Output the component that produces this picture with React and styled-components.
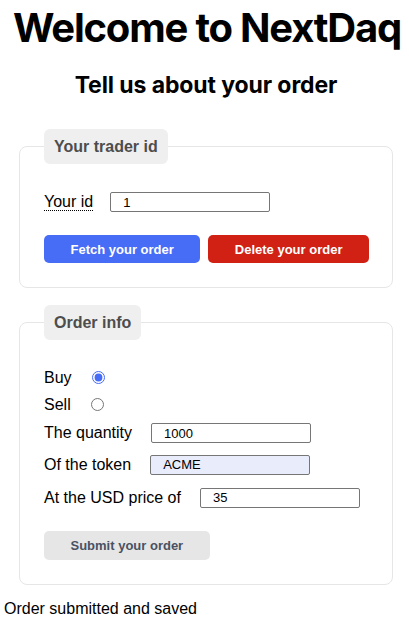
import React, { useState } from 'react'
import styled, { createGlobalStyle } from 'styled-components'

const GlobalStyle = createGlobalStyle`
  body {
    margin: 0;
    background: #fff;
    color: #000;
    font-family: "Liberation Sans", Arial, sans-serif;
    font-size: 16px;
  }
`

const Page = styled.div`
  padding: 0 4px;
`

const Title = styled.h1`
  margin: 4px 0 0;
  padding-left: 5px;
  font-family: Inter, "Liberation Sans", sans-serif;
  font-size: 40px;
  line-height: 48px;
  font-weight: 700;
  text-align: center;
  white-space: nowrap;
  letter-spacing: -1.2px;
`

const Subtitle = styled.h2`
  margin: 19px 0 0;
  padding-left: 3px;
  font-family: Inter, "Liberation Sans", sans-serif;
  font-size: 23px;
  line-height: 28px;
  font-weight: 700;
  text-align: center;
  letter-spacing: -0.1px;
`

const Fieldset = styled.fieldset`
  margin: ${p => p.$top}px 12px 0 15px;
  padding: 24px 24px 24px;
  border: 1px solid #e6e6e6;
  border-radius: 8px;
  min-width: 0;
`

const Legend = styled.legend`
  padding: 8px 10px;
  margin-left: 0;
  background: #efefef;
  border-radius: 6px;
  color: #4d4d4d;
  font-weight: 700;
  font-size: 16px;
  line-height: 19px;
`

const Row = styled.div`
  display: flex;
  align-items: center;
  height: ${p => p.$h}px;
`

const Label = styled.label`
  margin-right: ${p => p.$gap || 0}px;
  white-space: nowrap;
`

const Abbr = styled.span`
  text-decoration: underline dotted;
  text-underline-offset: 3px;
  text-decoration-thickness: 1px;
`

const TextInput = styled.input`
  box-sizing: border-box;
  width: 160px;
  height: 20px;
  padding: 0 12px;
  border: 1px solid #767676;
  border-radius: 2px;
  background: ${p => (p.$filled ? '#e8ecfb' : '#fff')};
  font-family: "Liberation Sans", Arial, sans-serif;
  font-size: 13px;
  color: #000;
  outline: none;
`

const Radio = styled.input`
  width: 13px;
  height: 13px;
  margin: 0 0 0 20px;
  accent-color: #476cf6;
`

const Buttons = styled.div`
  display: flex;
  gap: 8px;
  margin-top: 19px;
`

const Button = styled.button`
  flex-shrink: 0;
  height: ${p => p.$h || 28}px;
  padding: 0 ${p => p.$px || 25}px;
  border: none;
  border-radius: 5px;
  font-family: "Liberation Sans", Arial, sans-serif;
  font-size: 13px;
  font-weight: 700;
  white-space: nowrap;
  color: ${p => p.$color || '#fff'};
  background: ${p => p.$bg};
  cursor: pointer;
`

const SubmitWrap = styled.div`
  margin-top: 17px;
`

const Status = styled.p`
  margin: 15px 0 0;
  line-height: 18px;
`

export default function App () {
  const [side, setSide] = useState('buy')

  return (
    <Page>
      <GlobalStyle />
      <Title>Welcome to NextDaq</Title>
      <Subtitle>Tell us about your order</Subtitle>

      <Fieldset $top={30}>
        <Legend>Your trader id</Legend>
        <Row $h={28}>
          <Label $gap={17}><Abbr>Your id</Abbr></Label>
          <TextInput defaultValue='1' />
        </Row>
        <Buttons>
          <Button $bg='#476cf6' $px={26.5}>Fetch your order</Button>
          <Button $bg='#d02114' $px={26.5}>Delete your order</Button>
        </Buttons>
      </Fieldset>

      <Fieldset $top={17}>
        <Legend>Order info</Legend>
        <Row $h={27}>
          <Label>Buy</Label>
          <Radio type='radio' name='side' checked={side === 'buy'} onChange={() => setSide('buy')} />
        </Row>
        <Row $h={27}>
          <Label>Sell</Label>
          <Radio type='radio' name='side' checked={side === 'sell'} onChange={() => setSide('sell')} />
        </Row>
        <Row $h={30}>
          <Label $gap={19}>The quantity</Label>
          <TextInput defaultValue='1000' />
        </Row>
        <Row $h={33}>
          <Label $gap={19}>Of the token</Label>
          <TextInput $filled defaultValue='ACME' />
        </Row>
        <Row $h={33}>
          <Label $gap={19}>At the USD price of</Label>
          <TextInput defaultValue='35' />
        </Row>
        <SubmitWrap>
          <Button $bg='#e6e6e6' $color='#4a5163' $h={29} $px={26.5}>Submit your order</Button>
        </SubmitWrap>
      </Fieldset>

      <Status>Order submitted and saved</Status>
    </Page>
  )
}
